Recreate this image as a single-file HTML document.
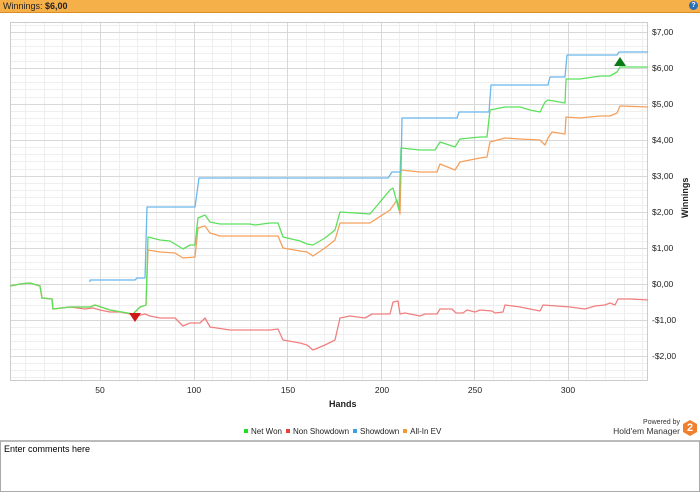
<!DOCTYPE html>
<html><head><meta charset="utf-8"><style>
body{margin:0;width:700px;height:492px;background:#fff;font-family:"Liberation Sans",sans-serif;position:relative;overflow:hidden}
.hdr{position:absolute;left:0;top:0;width:700px;height:12px;background:#f5b04a;border-bottom:1px solid #d98e22;font-size:9px;line-height:12px;color:#222}
.hdr span{padding-left:3px}
.help{position:absolute;right:2px;top:1px;width:9px;height:9px;border-radius:50%;background:#2a6fb8;color:#fff;font-size:7px;line-height:9px;text-align:center;font-weight:bold}
.cmt{position:absolute;left:0;top:440px;width:697px;height:50px;border:1px solid #aaa;border-top:2px solid #bbb;font-size:9px;padding:2px 3px;box-sizing:border-box;width:700px;height:52px}
.lg{position:absolute;top:427px;left:240px;font-size:8px;color:#222}
.lg i{display:inline-block;width:4px;height:4px;margin:0 3px 1px 4px}
.pw{position:absolute;right:20px;top:418px;font-size:7px;color:#333;text-align:right;line-height:9px}
.pw b{font-weight:normal;font-size:8.5px}
.hx{position:absolute;right:3px;top:420px;width:14px;height:16px;background:#f08030;color:#fff;font-weight:bold;font-size:11px;text-align:center;line-height:16px;clip-path:polygon(50% 0,100% 25%,100% 75%,50% 100%,0 75%,0 25%)}
</style></head><body>
<div class="hdr"><span>Winnings: <b>$6,00</b></span><div class="help">?</div></div>
<svg width="700" height="420" style="position:absolute;left:0;top:0" font-family="Liberation Sans" font-size="8.5">
<g id="grid" stroke="#efefef" stroke-width="1">
</g>
<script>/*no-op*/</script>
<g stroke="#efefef" stroke-width="1">
<path d="M10 25.5H648M10 39.5H648M10 46.5H648M10 53.5H648M10 61.5H648M10 75.5H648M10 82.5H648M10 89.5H648M10 97.5H648M10 111.5H648M10 118.5H648M10 125.5H648M10 133.5H648M10 147.5H648M10 154.5H648M10 161.5H648M10 169.5H648M10 183.5H648M10 190.5H648M10 197.5H648M10 205.5H648M10 219.5H648M10 226.5H648M10 233.5H648M10 241.5H648M10 255.5H648M10 262.5H648M10 269.5H648M10 277.5H648M10 291.5H648M10 298.5H648M10 305.5H648M10 313.5H648M10 327.5H648M10 334.5H648M10 341.5H648M10 349.5H648M10 363.5H648M10 370.5H648M10 377.5H648"/>
<path d="M25.5 22V381M44.5 22V381M62.5 22V381M81.5 22V381M119.5 22V381M137.5 22V381M156.5 22V381M175.5 22V381M212.5 22V381M231.5 22V381M250.5 22V381M268.5 22V381M306.5 22V381M324.5 22V381M343.5 22V381M362.5 22V381M399.5 22V381M418.5 22V381M436.5 22V381M455.5 22V381M493.5 22V381M511.5 22V381M530.5 22V381M549.5 22V381M586.5 22V381M605.5 22V381M624.5 22V381M642.5 22V381"/>
</g>
<g stroke="#d8d8d8" stroke-width="1">
<path d="M10 32.5H648M10 68.5H648M10 104.5H648M10 140.5H648M10 176.5H648M10 212.5H648M10 248.5H648M10 284.5H648M10 320.5H648M10 356.5H648"/>
<path d="M100.5 22V381M194.5 22V381M287.5 22V381M381.5 22V381M474.5 22V381M568.5 22V381"/>
</g>
<rect x="10.5" y="22.5" width="637" height="358" fill="none" stroke="#ccc"/>
<g fill="#222" font-size="8.5">
<text x="652" y="35">$7,00</text><text x="652" y="71">$6,00</text><text x="652" y="107">$5,00</text><text x="652" y="143">$4,00</text><text x="652" y="179">$3,00</text><text x="652" y="215">$2,00</text><text x="652" y="251">$1,00</text><text x="652" y="287">$0,00</text><text x="652" y="323">-$1,00</text><text x="652" y="359">-$2,00</text>
<g text-anchor="middle"><text x="100" y="393">50</text><text x="194" y="393">100</text><text x="288" y="393">150</text><text x="382" y="393">200</text><text x="475" y="393">250</text><text x="568" y="393">300</text></g>
<text x="329" y="407" font-weight="bold" font-size="9">Hands</text>
<text transform="translate(688,218) rotate(-90)" font-weight="bold" font-size="9">Winnings</text>
</g>
<g fill="none" stroke-width="1.3" stroke-linejoin="round">
<polyline stroke="#f08080" points="10,286 20,284 30,283 40,286 42,298 52,299 53,309 70,307 85,309 93,308 100,310 110,312 120,312 130,314 137,316 145,314 150,316 160,318 175,318 183,326 190,323 200,323 205,318 210,327 230,330 270,330 278,329 283,340 300,343 307,345 313,350 325,345 335,340 340,318 350,316 365,318 372,314 390,314 393,302 398,301 400,314 405,313 420,316 425,314 437,314 440,309 452,309 456,313 463,313 467,310 475,312 480,310 492,311 495,313 503,312 505,305 520,307 530,309 540,311 543,305 570,307 585,309 595,306 605,305 610,303 615,305 618,299 630,299 648,300"/>
<polyline stroke="#f5a05c" points="10,286 20,284 30,283 40,286 42,298 52,299 53,309 70,307 90,307 95,305 110,310 133,314 140,307 146,305 148,250 160,252 175,253 183,258 195,257 198,228 205,226 210,233 220,236 278,236 283,248 300,251 307,252 313,256 325,248 335,240 340,223 370,223 390,210 397,200 400,214 401,170 420,172 437,172 440,164 455,170 460,162 480,158 487,157 490,142 505,138 520,139 540,140 545,145 548,138 552,132 565,134 566,117 580,118 600,116 610,116 617,113 620,106 648,107"/>
<polyline stroke="#5ce05c" points="10,286 20,284 30,283 40,286 42,298 52,299 53,309 70,307 90,307 95,305 110,310 133,314 140,307 146,305 148,237 160,240 170,241 183,249 190,245 195,245 198,218 205,215 210,222 220,224 250,224 255,225 270,223 278,223 283,237 300,241 307,244 313,245 325,238 335,230 340,212 370,214 390,190 393,188 399,210 401,148 420,150 435,150 440,142 455,147 460,139 480,137 487,137 490,110 505,107 520,107 530,110 540,112 545,102 548,100 565,103 566,79 580,79 600,76 610,76 617,72 620,67 648,67"/>
<polyline stroke="#6ab8ec" points="90,282 90,280 135,280 137,278 145,278 147,207 195,207 199,178 388,178 392,172 401,172 402,118 457,118 459,112 489,112 491,85 548,85 550,77 565,77 567,55 617,55 619,52 648,52"/>
</g>
<polygon points="129,313 141,313 135,322" fill="#d01818"/>
<polygon points="620,66 614,66 620,57 626,66" fill="#0a7a14"/>
</svg>
<div class="lg"><i style="background:#22dd22"></i>Net Won<i style="background:#e84040"></i>Non Showdown<i style="background:#3aa0e8"></i>Showdown<i style="background:#f59a30"></i>All-In EV</div>
<div class="pw">Powered by<br><b>Hold'em Manager</b></div>
<div class="hx">2</div>
<div class="cmt">Enter comments here</div>
</body></html>
